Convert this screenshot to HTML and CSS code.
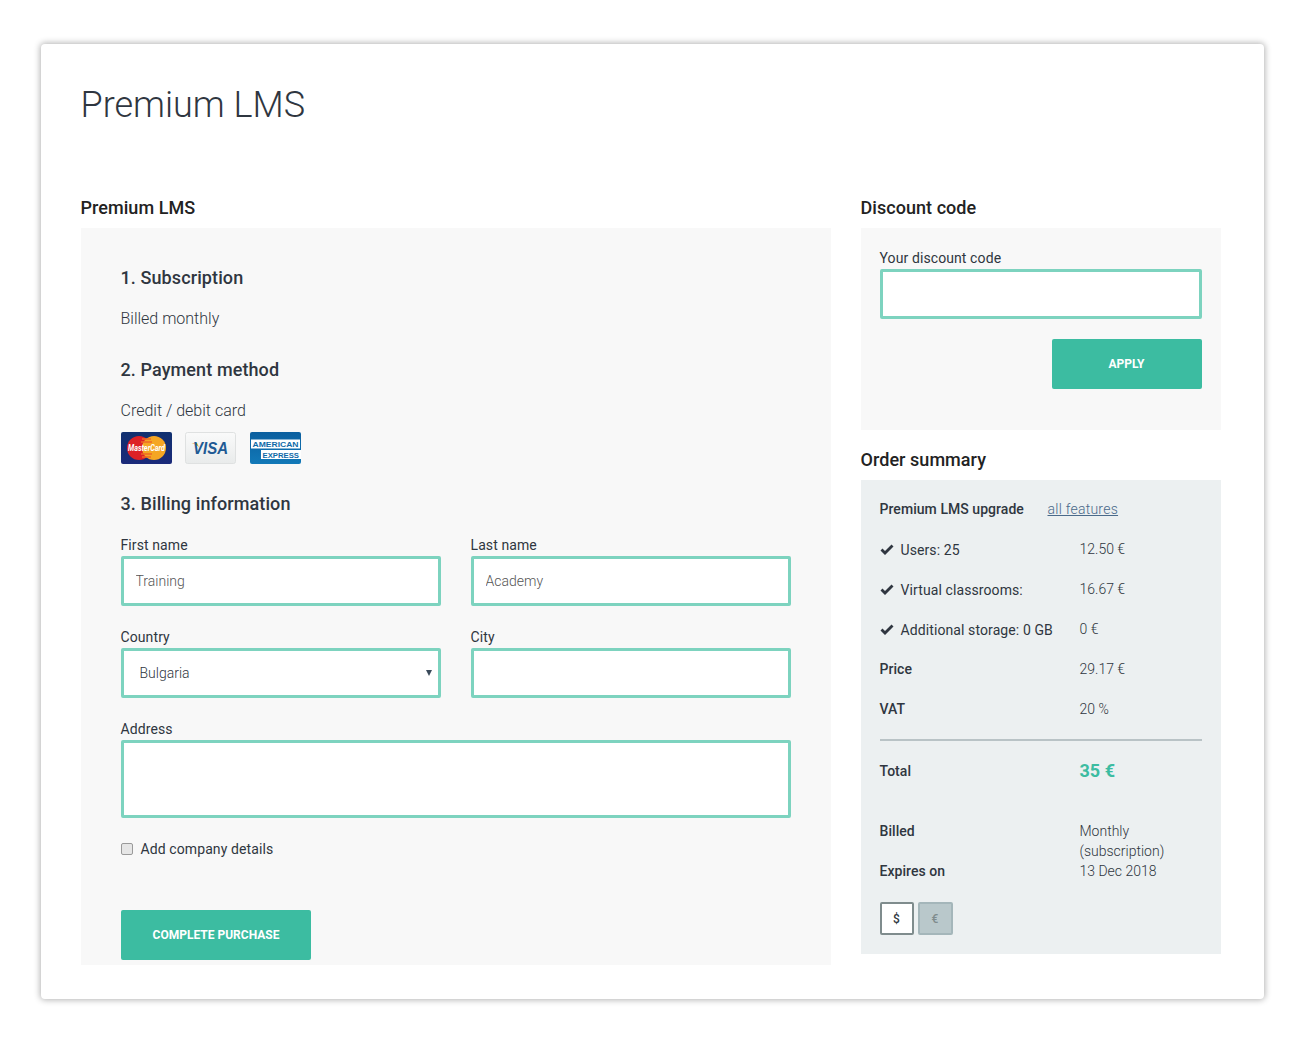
FILE: index.html
```html
<!DOCTYPE html>
<html lang="en">
<head>
<meta charset="utf-8">
<title>Premium LMS</title>
<link rel="stylesheet" href="styles.css">
</head>
<body>
<main class="card">
  <h1 class="title">Premium LMS</h1>
  <div class="columns">
    <section class="main-col">
      <h2 class="section-title">Premium LMS</h2>
      <div class="panel">
        <h3 class="step">1. Subscription</h3>
        <p class="step-text">Billed monthly</p>
        <h3 class="step">2. Payment method</h3>
        <p class="step-text step-text-card">Credit / debit card</p>
        <div class="pay-logos">
          <svg class="pay-logo" viewBox="0 0 51 32" width="51" height="32">
            <defs>
              <linearGradient id="mcbg" x1="0" y1="0" x2="0" y2="1"><stop offset="0" stop-color="#10306f"/><stop offset="1" stop-color="#1b2a7a"/></linearGradient>
              <linearGradient id="vbg" x1="0" y1="0" x2="0" y2="1"><stop offset="0" stop-color="#fafafa"/><stop offset="1" stop-color="#e9ebeb"/></linearGradient>
              <linearGradient id="abg" x1="0" y1="0" x2="0" y2="1"><stop offset="0" stop-color="#0b5f9f"/><stop offset="1" stop-color="#1279b8"/></linearGradient>
            </defs>
            <rect width="51" height="32" rx="2" fill="url(#mcbg)"/>
            <circle cx="18" cy="16" r="12" fill="#dd2127"/>
            <circle cx="33" cy="16" r="12" fill="#f5a623"/>
            <path d="M21 7h9M20 10h11M20 22h11M21 25h9" stroke="#ee6a24" stroke-width="1.500"/>
            <text x="7" y="19" class="mc-text" textLength="37" lengthAdjust="spacingAndGlyphs">MasterCard</text>
          </svg>
          <svg class="pay-logo" viewBox="0 0 51 32" width="51" height="32">
            <rect x=".5" y=".5" width="50" height="31" rx="2" fill="url(#vbg)" stroke="#dfe1e1"/>
            <path d="M6.500 11H12l2.500 5C13 13.500 10 12 6.500 11z" fill="#eeaa2c"/>
            <text x="8" y="22" class="visa-text" textLength="35" lengthAdjust="spacingAndGlyphs">VISA</text>
          </svg>
          <svg class="pay-logo" viewBox="0 0 51 32" width="51" height="32">
            <rect width="51" height="32" rx="2" fill="url(#abg)"/>
            <rect x="1" y="7.500" width="49" height="9" fill="#fff"/>
            <rect x="11" y="18" width="40" height="9" fill="#fff"/>
            <text x="2.500" y="15" class="amex-text" textLength="46" lengthAdjust="spacingAndGlyphs">AMERICAN</text>
            <text x="12.500" y="25.500" class="amex-text" textLength="36.500" lengthAdjust="spacingAndGlyphs">EXPRESS</text>
          </svg>
        </div>
        <h3 class="step">3. Billing information</h3>
        <form class="form">
          <div class="form-row">
            <label class="field"><span class="field-label">First name</span><input class="input" type="text" placeholder="Training"></label>
            <label class="field"><span class="field-label">Last name</span><input class="input" type="text" placeholder="Academy"></label>
          </div>
          <div class="form-row">
            <label class="field"><span class="field-label">Country</span>
              <span class="select-wrap"><select class="input select"><option>Bulgaria</option></select><i class="select-arrow"></i></span>
            </label>
            <label class="field"><span class="field-label">City</span><input class="input" type="text"></label>
          </div>
          <label class="field"><span class="field-label">Address</span><textarea class="input textarea"></textarea></label>
          <label class="check"><input class="checkbox" type="checkbox"><span>Add company details</span></label>
          <button class="btn btn-purchase" type="button">COMPLETE PURCHASE</button>
        </form>
      </div>
    </section>
    <aside class="side-col">
      <h2 class="section-title">Discount code</h2>
      <div class="panel-discount">
        <label class="field"><span class="field-label">Your discount code</span><input class="input" type="text"></label>
        <div class="apply-row"><button class="btn btn-apply" type="button">APPLY</button></div>
      </div>
      <h2 class="section-title section-title-order">Order summary</h2>
      <div class="panel-order">
        <div class="row"><b class="row-label">Premium LMS upgrade</b><a class="features" href="#">all features</a></div>
        <div class="row"><span class="row-item"><svg class="tick" viewBox="0 0 14 12" width="14" height="12"><path d="M.5 6.500 2.500 4.500 5 7 11.500.5l2 2L5 11z" fill="#2f3640"/></svg>Users: 25</span><span class="value">12.50 €</span></div>
        <div class="row"><span class="row-item"><svg class="tick" viewBox="0 0 14 12" width="14" height="12"><path d="M.5 6.500 2.500 4.500 5 7 11.500.5l2 2L5 11z" fill="#2f3640"/></svg>Virtual classrooms:</span><span class="value">16.67 €</span></div>
        <div class="row"><span class="row-item"><svg class="tick" viewBox="0 0 14 12" width="14" height="12"><path d="M.5 6.500 2.500 4.500 5 7 11.500.5l2 2L5 11z" fill="#2f3640"/></svg>Additional storage: 0 GB</span><span class="value">0 €</span></div>
        <div class="row"><b class="row-label">Price</b><span class="value">29.17 €</span></div>
        <div class="row"><b class="row-label">VAT</b><span class="value">20 %</span></div>
        <hr class="rule">
        <div class="row row-total"><b class="row-label">Total</b><span class="total">35 €</span></div>
        <div class="row row-tight"><b class="row-label">Billed</b><span class="value">Monthly<br>(subscription)</span></div>
        <div class="row row-expires"><b class="row-label">Expires on</b><span class="value">13 Dec 2018</span></div>
        <div class="currency">
          <button class="cur cur-active" type="button">$</button>
          <button class="cur cur-off" type="button">€</button>
        </div>
      </div>
    </aside>
  </div>
</main>
</body>
</html>
```
FILE: styles.css
```css
* { box-sizing: border-box; }
html, body { margin: 0; padding: 0; background: #fff; }
body { font-family: Roboto, "Liberation Sans", sans-serif; color: #2f3640; padding: 44px 43.500px 44px 40.500px; }

.card { height: 955px; background: #fff; border-radius: 4px; box-shadow: 0 0 6px 1px rgba(0,0,0,.3); padding: 0 43px 0 40px; }
.title { margin: 0; padding-top: 39px; height: 144px; font-size: 36px; line-height: 44px; font-weight: 300; color: #2f3640; }

.columns { display: flex; gap: 30px; align-items: flex-start; }
.main-col { width: 750px; }
.side-col { width: 360px; }

.section-title { margin: 0; height: 40px; padding-top: 10px; font-size: 18px; line-height: 20px; font-weight: 500; color: #222; letter-spacing: .05px; }
.section-title-order { margin-top: 20px; height: 30px; padding-top: 0; }

.panel { background: #f8f8f8; height: 737px; padding: 40px 40px 0; }
.step { margin: 0; font-size: 18px; line-height: 20px; font-weight: 500; color: #2f3640; letter-spacing: .1px; }
.step-text { margin: 21px 0 31px; font-size: 16px; line-height: 20px; font-weight: 300; color: #2f3640; }
.step-text-card { margin-bottom: 11px; }
.pay-logos { display: flex; gap: 13.500px; margin-bottom: 30px; }
.pay-logo { display: block; flex: none; }
.mc-text { font: italic 700 8.500px Roboto, sans-serif; fill: #fff; }
.visa-text { font: italic 700 16px "Liberation Sans", sans-serif; fill: #1f5a94; }
.amex-text { font: 700 7.500px "Liberation Sans", sans-serif; fill: #0f6aa8; }

.form { margin-top: 23px; display: flex; flex-direction: column; }
.form-row { display: grid; grid-template-columns: 320px 320px; gap: 30px; margin-bottom: 23px; }
.field { display: block; }
.field-label { display: block; font-size: 14px; line-height: 16px; margin-bottom: 3px; color: #2f3640; letter-spacing: .1px; }
.input { display: block; width: 100%; height: 50px; margin: 0; padding: 0 12px; background: #fff; border: 3px solid #7dd3bf; border-radius: 2px; font-family: Roboto, sans-serif; font-size: 14px; font-weight: 300; color: #2f3640; outline: none; }
.input::placeholder { color: #555; opacity: 1; }
.select-wrap { display: block; position: relative; }
.select { appearance: none; -webkit-appearance: none; padding-left: 16px; }
.select-arrow { position: absolute; right: 9px; top: 22px; width: 0; height: 0; border: 3.500px solid transparent; border-top: 6px solid #3a4a5a; border-bottom: 0; }
.textarea { height: 78px; resize: none; padding: 12px; }

.check { display: flex; align-items: center; gap: 8px; margin-top: 23px; font-size: 14px; line-height: 16px; letter-spacing: .1px; }
.checkbox { appearance: none; -webkit-appearance: none; width: 12px; height: 12px; margin: 0; background: #e6e6e6; border: 1px solid #9a9a9a; border-radius: 2px; }
.btn { display: block; border: 0; border-radius: 2px; background: #3cbca1; color: #fff; font-family: Roboto, sans-serif; font-size: 12px; font-weight: 700; height: 50px; }
.btn-purchase { width: 190px; margin-top: 53px; padding-left: 7px; }

.panel-discount { background: #f8f8f8; height: 202px; padding: 22px 19px 0; }
.apply-row { display: flex; justify-content: flex-end; margin-top: 20px; }
.btn-apply { width: 150px; }

.panel-order { background: #ecf0f1; height: 474px; padding: 19px 19px 0; font-size: 14px; line-height: 20px; }
.row { display: flex; height: 20px; margin-bottom: 20px; }
.row-label { width: 200px; flex: none; font-weight: 500; color: #2f3640; white-space: nowrap; letter-spacing: .05px; }
.row:first-child .row-label { width: 168px; }
.row-item { width: 200px; flex: none; display: flex; align-items: center; white-space: nowrap; padding-top: 2px; letter-spacing: .1px; }
.tick { flex: none; margin-right: 7px; }
.features { color: #4a6a8a; text-decoration: underline; font-weight: 300; letter-spacing: .25px; }
.value { font-weight: 300; color: #2f3640; }
.rule { height: 2px; border: 0; margin: 0 0 20px; background: #b9c3c6; }
.row-total { margin-bottom: 40px; }
.total { font-size: 18px; font-weight: 700; color: #3cbca1; }
.row-tight { margin-bottom: 20px; }
.row-expires { margin-bottom: 21px; }
.currency { display: flex; gap: 4px; }
.cur { width: 34px; height: 33px; padding: 0; border-radius: 2px; font-family: Roboto, sans-serif; font-size: 12px; font-weight: 500; }
.cur-active { background: #fff; border: 2px solid #7f8c8d; color: #2f3640; }
.cur-off { width: 35px; background: #b9c8cb; border: 2px solid #a4b6ba; color: #7f8c8d; }
```
